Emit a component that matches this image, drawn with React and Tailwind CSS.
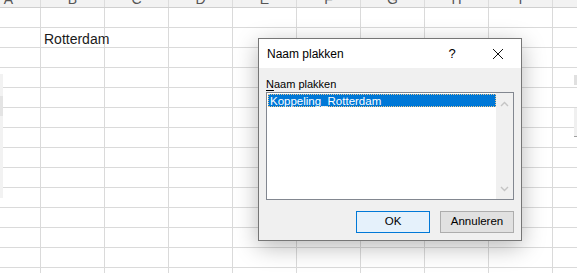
import React from "react";

const cols = ["A", "B", "C", "D", "E", "F", "G", "H", "I", "J"];
const rows = Array.from({ length: 14 }, (_, i) => i);

function Chevron({ up }) {
  return (
    <svg width="9" height="6" viewBox="0 0 9 6" className="block">
      <path
        d={up ? "M1 5 L4.5 1.5 L8 5" : "M1 1 L4.5 4.5 L8 1"}
        fill="none"
        stroke="#c4c4c4"
        strokeWidth="1.4"
      />
    </svg>
  );
}

export default function App() {
  return (
    <div
      className="relative w-[577px] h-[273px] overflow-hidden bg-white text-[#1a1a1a]"
      style={{ fontFamily: '"Liberation Sans", Arial, sans-serif' }}
    >
      {/* Sheet */}
      <div className="-ml-[23px] flex flex-col">
        {/* Column header */}
        <div className="flex h-[8px] border-b border-[#cfcfcf] bg-[#f2f2f2] overflow-hidden">
          {cols.map((c) => (
            <div
              key={c}
              className="w-[64px] shrink-0 border-r border-[#dcdcdc] flex justify-center"
            >
              <span className="-mt-[8px] text-[14px] leading-[14px] text-[#555]">{c}</span>
            </div>
          ))}
        </div>
        {rows.map((r) => (
          <div key={r} className="flex h-[20px] border-b border-[#dadada]">
            {cols.map((c) => (
              <div
                key={c}
                className="w-[64px] shrink-0 border-r border-[#dadada] flex items-end pl-[3px]"
              >
                {r === 1 && c === "B" ? (
                  <span className="text-[14px] leading-[16px] whitespace-nowrap">Rotterdam</span>
                ) : null}
              </div>
            ))}
          </div>
        ))}
      </div>

      {/* Remnants of other windows at the edges */}
      <div className="absolute left-0 top-[74px] w-[3px] h-[124px] bg-[#f2f2f2]">
        <div className="mt-[22px] h-[20px] bg-[#e4e4e4]" />
      </div>
      <div className="absolute right-0 top-[75px] w-[3px] h-[10px] bg-[#e0e0e0]" />
      <div className="absolute right-0 top-[108px] w-[3px] h-[29px] bg-[#f0f0f0] border-b border-[#a0a0a0]" />

      {/* Dialog */}
      <div className="absolute left-[258px] top-[38px] w-[264px] h-[203px] border border-[#767676] bg-[#f0f0f0] flex flex-col shadow-[0_6px_22px_rgba(0,0,0,0.28)]">
        {/* Title bar */}
        <div className="h-[29px] bg-white flex items-center">
          <span className="pl-[8px] text-[12px] text-black flex-1">Naam plakken</span>
          <span className="w-[16px] text-center text-[13px] text-black mr-[32px]">?</span>
          <svg width="12" height="12" viewBox="0 0 12 12" className="mr-[17px]">
            <path d="M1 1 L11 11 M11 1 L1 11" stroke="#111" strokeWidth="1" fill="none" />
          </svg>
        </div>

        {/* Content */}
        <div className="flex-1 flex flex-col px-[7px] pt-[8px]">
          <div className="text-[11px] leading-[16px] text-black">
            <span className="underline underline-offset-[2px]">N</span>aam plakken
          </div>
          <div className="h-[108px] border border-[#828790] bg-white flex">
            <div className="flex-1 pt-[1px] pl-[1px]">
              <div className="h-[13px] bg-[#0078d7] border border-dotted border-[#e9c790] flex items-center text-[11.5px] leading-[12px] text-white pl-[1px]">
                Koppeling_Rotterdam
              </div>
            </div>
            <div className="w-[17px] bg-[#f0f0f0] flex flex-col items-center justify-between pt-[8px] pb-[7px]">
              <Chevron up />
              <Chevron />
            </div>
          </div>
          <div className="flex justify-end gap-[10px] mt-[11px]">
            <button className="w-[74px] h-[22px] border border-[#0078d7] bg-[#e5f1fb] text-[11.5px] text-black">
              OK
            </button>
            <button className="w-[74px] h-[22px] border border-[#adadad] bg-[#e1e1e1] text-[11.5px] text-black">
              Annuleren
            </button>
          </div>
        </div>
      </div>
    </div>
  );
}
